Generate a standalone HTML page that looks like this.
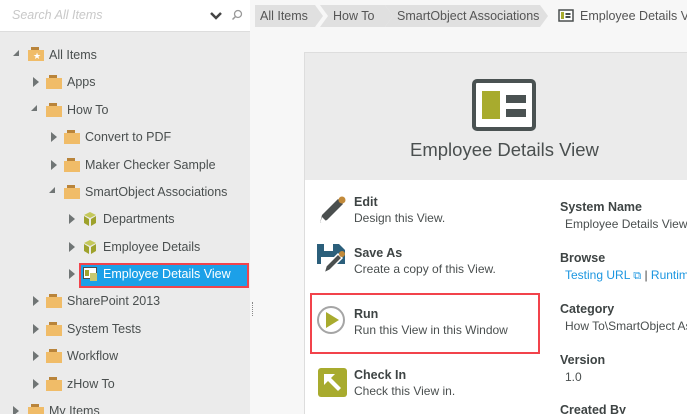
<!DOCTYPE html><html><head><style>
*{margin:0;padding:0;box-sizing:border-box}
html,body{width:687px;height:414px;overflow:hidden}
body{font-family:"Liberation Sans",sans-serif;background:#f7f7f7;position:relative;color:#4a4f4f}
.a{position:absolute;white-space:nowrap}
#left{position:absolute;left:0;top:0;width:250px;height:414px;background:#ebebeb}
#search{position:absolute;left:0;top:0;width:250px;height:32px;background:#fff;border-bottom:1px solid #ddd}
.tri{position:absolute;width:0;height:0;border-top:5px solid transparent;border-bottom:5px solid transparent;border-left:6px solid #707575}
.trd{position:absolute;width:0;height:0;border-left:6px solid transparent;border-bottom:6px solid #707575}
.fold{position:absolute;width:16px;height:14px}
.fold:before{content:"";position:absolute;left:3px;top:0;width:8px;height:3px;background:#b9843a}
.fold:after{content:"";position:absolute;left:0;top:3px;width:16px;height:11px;background:#f0bc68}
.t{position:absolute;font-size:12.5px;color:#4a4f4f;white-space:nowrap}
.bc{position:absolute;top:5px;height:22px;background:#e0e0e0;font-size:12.5px;line-height:22px;color:#555;white-space:nowrap}
.h{font-weight:bold;font-size:12.5px;color:#3e4444}
.d{font-size:12px;color:#4a4f4f}
</style></head><body>
<div id="left">
<div id="search"><span class="a" style="left:12px;top:8px;font-size:12.5px;font-style:italic;color:#c8c8c8">Search All Items</span>
<svg class="a" style="left:209px;top:11px" width="14" height="10"><path d="M2 2l5 5 5-5" stroke="#444" stroke-width="2.5" fill="none"/></svg>
<svg class="a" style="left:231px;top:9px" width="12" height="12"><circle cx="7" cy="5" r="3.5" stroke="#999" stroke-width="1.3" fill="none"/><path d="M4.5 7.5L1.5 10.5" stroke="#999" stroke-width="1.5"/></svg></div>
<div class="trd" style="left:13px;top:50px"></div>
<div class="fold" style="left:28px;top:47px"></div><span class="a" style="left:33px;top:51px;color:#fff;font-size:9px">★</span><div class="t" style="left:49px;top:48px">All Items</div>
<div class="tri" style="left:33px;top:77px"></div><div class="fold" style="left:46px;top:75px"></div><div class="t" style="left:67px;top:75px">Apps</div>
<div class="trd" style="left:31px;top:105px"></div><div class="fold" style="left:46px;top:103px"></div><div class="t" style="left:67px;top:103px">How To</div>
<div class="tri" style="left:51px;top:132px"></div><div class="fold" style="left:64px;top:130px"></div><div class="t" style="left:85px;top:130px">Convert to PDF</div>
<div class="tri" style="left:51px;top:160px"></div><div class="fold" style="left:64px;top:158px"></div><div class="t" style="left:85px;top:158px">Maker Checker Sample</div>
<div class="trd" style="left:49px;top:187px"></div><div class="fold" style="left:64px;top:185px"></div><div class="t" style="left:85px;top:185px">SmartObject Associations</div>
<div class="tri" style="left:69px;top:214px"></div><svg class="a" style="left:83px;top:211px" width="14" height="15"><path d="M1 4l6-3 6 3-6 3z" fill="#c4c85a"/><path d="M1 5l5 3v7l-5-3z" fill="#9ea22c"/><path d="M13 5l-5 3v7l5-3z" fill="#9ea22c"/></svg><div class="t" style="left:103px;top:212px">Departments</div>
<div class="tri" style="left:69px;top:242px"></div><svg class="a" style="left:83px;top:239px" width="14" height="15"><path d="M1 4l6-3 6 3-6 3z" fill="#c4c85a"/><path d="M1 5l5 3v7l-5-3z" fill="#9ea22c"/><path d="M13 5l-5 3v7l5-3z" fill="#9ea22c"/></svg><div class="t" style="left:103px;top:240px">Employee Details</div>
<div class="tri" style="left:69px;top:269px"></div>
<div class="a" style="left:79px;top:263px;width:170px;height:25px;border:2px solid #f2434b;background:#1ca0e8"></div>
<svg class="a" style="left:83px;top:267px" width="15" height="15"><rect x="0.5" y="0.5" width="13" height="11" fill="#fff" stroke="#4a4f4f"/><rect x="2" y="3" width="4" height="6" fill="#9ea22c"/><rect x="7" y="6" width="7" height="8" fill="#c8c870"/></svg>
<div class="t" style="left:103px;top:267px;color:#fff">Employee Details View</div>
<div class="tri" style="left:33px;top:296px"></div><div class="fold" style="left:46px;top:294px"></div><div class="t" style="left:67px;top:294px">SharePoint 2013</div>
<div class="tri" style="left:33px;top:324px"></div><div class="fold" style="left:46px;top:322px"></div><div class="t" style="left:67px;top:322px">System Tests</div>
<div class="tri" style="left:33px;top:351px"></div><div class="fold" style="left:46px;top:349px"></div><div class="t" style="left:67px;top:349px">Workflow</div>
<div class="tri" style="left:33px;top:379px"></div><div class="fold" style="left:46px;top:377px"></div><div class="t" style="left:67px;top:377px">zHow To</div>
<div class="tri" style="left:13px;top:406px"></div><div class="fold" style="left:28px;top:404px"></div><div class="t" style="left:49px;top:404px">My Items</div>
</div>
<div class="a" style="left:252px;top:302px;width:1px;height:14px;border-left:1px dotted #888"></div>
<div class="bc" style="left:255px;width:68px;padding-left:5px;clip-path:polygon(0 0,60px 0,68px 50%,60px 100%,0 100%)">All Items</div>
<div class="bc" style="left:320px;width:73px;padding-left:13px;clip-path:polygon(0 0,65px 0,73px 50%,65px 100%,0 100%,8px 50%)">How To</div>
<div class="bc" style="left:385px;width:163px;padding-left:12px;clip-path:polygon(0 0,155px 0,163px 50%,155px 100%,0 100%,8px 50%)">SmartObject Associations</div>
<svg class="a" style="left:558px;top:9px" width="16" height="14"><rect x="1" y="1" width="14" height="11" fill="#fff" stroke="#4a4f4f" stroke-width="1.5"/><rect x="3" y="3" width="3" height="7" fill="#a8ab2e"/><rect x="7.5" y="4" width="5" height="2" fill="#4a4f4f"/><rect x="7.5" y="7" width="5" height="2" fill="#4a4f4f"/></svg>
<div class="a" style="left:580px;top:5px;font-size:12.5px;line-height:22px;color:#555">Employee Details View</div>
<div class="a" style="left:304px;top:52px;width:390px;height:370px;background:#fff;border:1px solid #ddd"></div>
<div class="a" style="left:305px;top:53px;width:390px;height:127px;background:#ebebeb"></div>
<svg class="a" style="left:472px;top:79px" width="64" height="52"><rect x="2" y="2" width="60" height="48" rx="3" fill="#fff" stroke="#4a5252" stroke-width="4"/><rect x="10" y="12" width="18" height="28" fill="#a8ab2e"/><rect x="34" y="16" width="20" height="8" fill="#4a5252"/><rect x="34" y="30" width="20" height="8" fill="#4a5252"/></svg>
<div class="a" style="left:410px;top:139px;font-size:18.5px;color:#4a4f4f">Employee Details View</div>
<svg class="a" style="left:317px;top:195px" width="30" height="30"><path d="M3 28l2-8 16-16 5 5-16 16z" fill="#4a4f4f"/><circle cx="25" cy="5" r="3.5" fill="#c28a3a"/><path d="M3 28l2-6 4 4z" fill="#fff"/></svg>
<div class="a h" style="left:354px;top:195px">Edit</div><div class="a d" style="left:354px;top:211px">Design this View.</div>
<svg class="a" style="left:316px;top:243px" width="32" height="32"><path d="M1 1h22l6 6v14H1z" fill="#2b5f7b"/><rect x="8" y="1" width="9" height="7" fill="#fff"/><rect x="5" y="14" width="14" height="12" fill="#fff"/><path d="M8 30l2-7 12-12 4 4-12 12z" fill="#4a4f4f" stroke="#fff" stroke-width="1.5"/><circle cx="26" cy="11" r="3" fill="#c28a3a"/></svg>
<div class="a h" style="left:354px;top:246px">Save As</div><div class="a d" style="left:354px;top:262px">Create a copy of this View.</div>
<div class="a" style="left:310px;top:293px;width:230px;height:61px;border:2px solid #f2434b"></div>
<svg class="a" style="left:316px;top:305px" width="30" height="30"><circle cx="15" cy="15" r="13" fill="#fff" stroke="#a5a5a5" stroke-width="2"/><path d="M10 7v16l13-8z" fill="#a8ab2e"/></svg>
<div class="a h" style="left:354px;top:307px">Run</div><div class="a d" style="left:354px;top:323px">Run this View in this Window</div>
<svg class="a" style="left:318px;top:368px" width="29" height="29"><rect width="29" height="29" rx="3" fill="#a8ab2e"/><path d="M6 6h11l-4 4 10 10-3 3-10-10-4 4z" fill="#fff"/></svg>
<div class="a h" style="left:354px;top:368px">Check In</div><div class="a d" style="left:354px;top:384px">Check this View in.</div>
<div class="a h" style="left:560px;top:200px">System Name</div><div class="a d" style="left:565px;top:217px">Employee Details View</div>
<div class="a h" style="left:560px;top:251px">Browse</div><div class="a d" style="left:565px;top:268px;color:#1c96e0">Testing URL <span style="font-size:11px">⧉</span> <span style="color:#444">|</span> Runtime URL</div>
<div class="a h" style="left:560px;top:302px">Category</div><div class="a d" style="left:565px;top:319px">How To\SmartObject Associations</div>
<div class="a h" style="left:560px;top:353px">Version</div><div class="a d" style="left:565px;top:370px">1.0</div>
<div class="a h" style="left:560px;top:403px">Created By</div>
</body></html>
